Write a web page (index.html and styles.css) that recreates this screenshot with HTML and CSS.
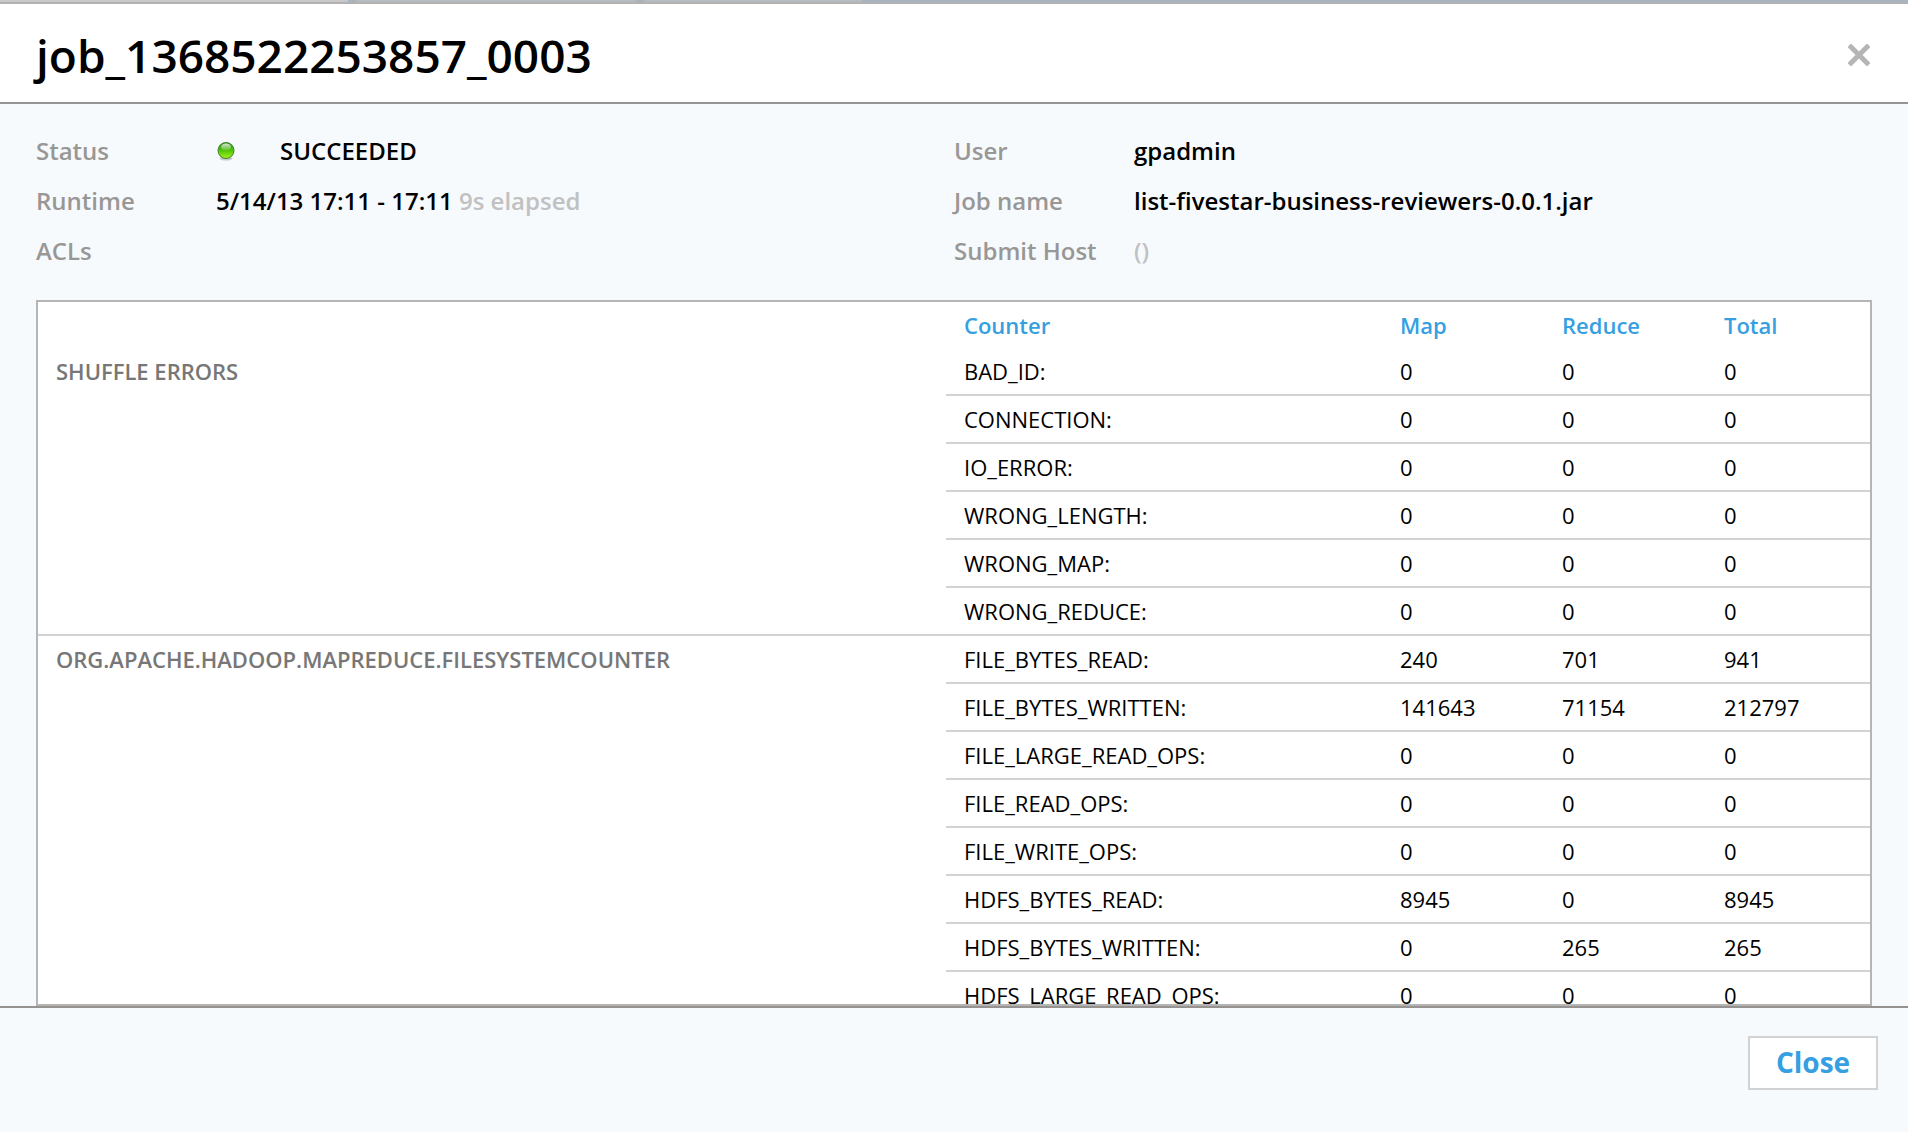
FILE: index.html
```html
<!DOCTYPE html>
<html lang="en">
<head>
<meta charset="utf-8">
<title>job_1368522253857_0003</title>
<link rel="stylesheet" href="styles.css">
</head>
<body>
<div class="tabs" aria-hidden="true">
  <span class="tab tab-active"></span>
  <span class="tab"></span>
  <span class="tab tab-last"></span>
</div>
<section class="dialog" role="dialog" aria-labelledby="job-title">
  <header class="dialog-header">
    <h1 class="title" id="job-title">job_1368522253857_0003</h1>
    <button class="dismiss" type="button" aria-label="Dismiss">
      <svg width="22" height="22" viewBox="0 0 22 22"><path d="M3 3L19 19M19 3L3 19" stroke="#b5b5b5" stroke-width="5" fill="none" stroke-linecap="square"/></svg>
    </button>
  </header>
  <div class="dialog-body">
    <div class="summary">
      <dl class="facts">
        <dt>Status</dt>
        <dd class="status">
          <svg class="led" width="20" height="20" viewBox="0 0 40 40">
            <defs>
              <linearGradient id="led-fill" x1="0" y1="0" x2="0" y2="1">
                <stop offset="0" stop-color="#2a8c14"/>
                <stop offset="0.5" stop-color="#4fc408"/>
                <stop offset="1" stop-color="#a8f520"/>
              </linearGradient>
              <linearGradient id="led-shine" x1="0" y1="0" x2="0" y2="1">
                <stop offset="0" stop-color="#fff" stop-opacity="0.8"/>
                <stop offset="1" stop-color="#fff" stop-opacity="0.1"/>
              </linearGradient>
            </defs>
            <ellipse cx="20" cy="35" rx="13" ry="4" fill="#c4cbd0"/>
            <circle cx="20" cy="19" r="16" fill="url(#led-fill)" stroke="#3f8128" stroke-width="2"/>
            <ellipse cx="20" cy="12" rx="10" ry="7" fill="url(#led-shine)"/>
          </svg>
          <span>SUCCEEDED</span>
        </dd>
        <dt>Runtime</dt>
        <dd>5/14/13 17:11 - 17:11 <span class="muted">9s elapsed</span></dd>
        <dt>ACLs</dt>
        <dd></dd>
      </dl>
      <dl class="facts">
        <dt>User</dt>
        <dd>gpadmin</dd>
        <dt>Job name</dt>
        <dd>list-fivestar-business-reviewers-0.0.1.jar</dd>
        <dt>Submit Host</dt>
        <dd><span class="muted">()</span></dd>
      </dl>
    </div>
    <div class="counters-box">
      <table class="counters">
        <colgroup><col><col class="col-name"><col class="col-value"><col class="col-value"><col class="col-total"></colgroup>
        <thead>
          <tr><td></td><th scope="col">Counter</th><th scope="col">Map</th><th scope="col">Reduce</th><th scope="col">Total</th></tr>
        </thead>
        <tbody>
          <tr><th class="group" scope="rowgroup" rowspan="6">SHUFFLE ERRORS</th><td>BAD_ID:</td><td>0</td><td>0</td><td>0</td></tr>
          <tr><td>CONNECTION:</td><td>0</td><td>0</td><td>0</td></tr>
          <tr><td>IO_ERROR:</td><td>0</td><td>0</td><td>0</td></tr>
          <tr><td>WRONG_LENGTH:</td><td>0</td><td>0</td><td>0</td></tr>
          <tr><td>WRONG_MAP:</td><td>0</td><td>0</td><td>0</td></tr>
          <tr><td>WRONG_REDUCE:</td><td>0</td><td>0</td><td>0</td></tr>
        </tbody>
        <tbody>
          <tr><th class="group" scope="rowgroup" rowspan="8">ORG.APACHE.HADOOP.MAPREDUCE.FILESYSTEMCOUNTER</th><td>FILE_BYTES_READ:</td><td>240</td><td>701</td><td>941</td></tr>
          <tr><td>FILE_BYTES_WRITTEN:</td><td>141643</td><td>71154</td><td>212797</td></tr>
          <tr><td>FILE_LARGE_READ_OPS:</td><td>0</td><td>0</td><td>0</td></tr>
          <tr><td>FILE_READ_OPS:</td><td>0</td><td>0</td><td>0</td></tr>
          <tr><td>FILE_WRITE_OPS:</td><td>0</td><td>0</td><td>0</td></tr>
          <tr><td>HDFS_BYTES_READ:</td><td>8945</td><td>0</td><td>8945</td></tr>
          <tr><td>HDFS_BYTES_WRITTEN:</td><td>0</td><td>265</td><td>265</td></tr>
          <tr><td>HDFS_LARGE_READ_OPS:</td><td>0</td><td>0</td><td>0</td></tr>
        </tbody>
      </table>
    </div>
  </div>
  <footer class="dialog-footer">
    <button class="close" type="button">Close</button>
  </footer>
</section>
</body>
</html>
```
FILE: styles.css
```css
* {
  box-sizing: border-box;
}

body {
  margin: 0;
  height: 100vh;
  display: flex;
  flex-direction: column;
  background: #f6fafd;
  color: #000;
  font-family: "Open Sans", "Noto Sans", sans-serif;
}

/* Sliver of the page's tab bar above the dialog */
.tabs {
  flex: none;
  display: flex;
  gap: 8px;
  height: 2px;
  background: #a8b4c0;
}

.tab {
  width: 280px;
  background: #b7bcc0;
}

.tab-active {
  width: 348px;
  background: #c9c9c9;
}

.tab-last {
  width: 218px;
}

.dialog {
  flex: 1;
  min-height: 0;
  display: flex;
  flex-direction: column;
  border-top: 2px solid #b2b2b2;
}

.dialog-header {
  flex: none;
  display: flex;
  align-items: center;
  justify-content: space-between;
  height: 100px;
  padding: 4px 38px 0 36px;
  background: #fff;
  border-bottom: 2px solid #969494;
}

.title {
  margin: 0;
  font-size: 46px;
  line-height: 64px;
  font-weight: 600;
}

.dismiss {
  display: flex;
  padding: 0;
  border: 0;
  background: none;
}

.dialog-body {
  flex: 1;
  min-height: 0;
  display: flex;
  flex-direction: column;
  gap: 24px;
  padding: 22px 36px 0;
}

.summary {
  display: grid;
  grid-template-columns: 1fr 1fr;
}

.facts {
  display: grid;
  grid-template-columns: 180px 1fr;
  grid-auto-rows: 50px;
  margin: 0;
  font-size: 24px;
  line-height: 50px;
  font-weight: 600;
}

.facts dt {
  color: #999796;
}

.facts dd {
  margin: 0;
}

.status {
  display: flex;
  align-items: center;
  gap: 44px;
}

.muted {
  color: #c1c1c1;
}

.counters-box {
  flex: 1;
  min-height: 0;
  overflow-y: auto;
  scrollbar-width: none;
  background: #fff;
  border: 2px solid #b5b5b5;
}

.counters {
  width: 100%;
  table-layout: fixed;
  border-collapse: separate;
  border-spacing: 0;
  font-size: 22px;
  line-height: 46px;
}

.col-name {
  width: 436px;
}

.col-value {
  width: 162px;
}

.col-total {
  width: 164px;
}

.counters th,
.counters td {
  padding: 0 18px;
  text-align: left;
  vertical-align: top;
}

.counters thead th {
  color: #369fe2;
  font-weight: 600;
}

.counters tbody th,
.counters tbody td {
  border-bottom: 2px solid #d2d2d2;
}

.counters .group {
  color: #777;
  font-weight: 600;
}

.dialog-footer {
  flex: none;
  display: flex;
  justify-content: flex-end;
  height: 126px;
  padding: 28px 30px;
  border-top: 2px solid #969290;
}

.close {
  width: 130px;
  height: 54px;
  padding: 0 0 2px;
  border: 2px solid #d2d2d2;
  background: #fff;
  color: #369fe2;
  font-family: inherit;
  font-size: 28px;
  line-height: 48px;
  font-weight: 700;
}
```
